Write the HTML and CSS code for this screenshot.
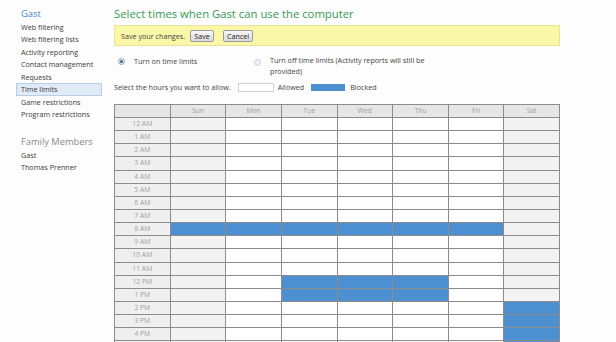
FILE: index.html
```html
<!DOCTYPE html>
<html>
<head>
<meta charset="utf-8">
<link rel="stylesheet" href="styles.css">
</head>
<body>
<div class="page">
  <aside class="sidebar">
    <h2 class="side-title">Gast</h2>
    <ul class="nav">
      <li>Web filtering</li>
      <li>Web filtering lists</li>
      <li>Activity reporting</li>
      <li>Contact management</li>
      <li>Requests</li>
      <li class="active">Time limits</li>
      <li>Game restrictions</li>
      <li>Program restrictions</li>
    </ul>
    <h3 class="family-title">Family Members</h3>
    <ul class="nav">
      <li>Gast</li>
      <li>Thomas Prenner</li>
    </ul>
  </aside>
  <main class="main">
    <h1 class="title">Select times when Gast can use the computer</h1>
    <div class="savebar">
      <span>Save your changes.</span>
      <button class="btn btn-save">Save</button>
      <button class="btn btn-cancel">Cancel</button>
    </div>
    <div class="options">
      <div class="option opt-on"><span class="radio checked"></span><span>Turn on time limits</span></div>
      <div class="option opt-off"><span class="radio"></span><span>Turn off time limits (Activity reports will still be provided)</span></div>
    </div>
    <div class="legend">
      <span>Select the hours you want to allow.</span>
      <span class="swatch allowed"></span><span>Allowed</span>
      <span class="swatch blocked"></span><span>Blocked</span>
    </div>
    <div class="grid">
      <div class="hd"></div><div class="hd">Sun</div><div class="hd">Mon</div><div class="hd">Tue</div><div class="hd">Wed</div><div class="hd">Thu</div><div class="hd">Fri</div><div class="hd">Sat</div>

      <div class="lb">12 AM</div><div class="c we"></div><div class="c"></div><div class="c"></div><div class="c"></div><div class="c"></div><div class="c"></div><div class="c we"></div>
      <div class="lb">1 AM</div><div class="c we"></div><div class="c"></div><div class="c"></div><div class="c"></div><div class="c"></div><div class="c"></div><div class="c we"></div>
      <div class="lb">2 AM</div><div class="c we"></div><div class="c"></div><div class="c"></div><div class="c"></div><div class="c"></div><div class="c"></div><div class="c we"></div>
      <div class="lb">3 AM</div><div class="c we"></div><div class="c"></div><div class="c"></div><div class="c"></div><div class="c"></div><div class="c"></div><div class="c we"></div>
      <div class="lb">4 AM</div><div class="c we"></div><div class="c"></div><div class="c"></div><div class="c"></div><div class="c"></div><div class="c"></div><div class="c we"></div>
      <div class="lb">5 AM</div><div class="c we"></div><div class="c"></div><div class="c"></div><div class="c"></div><div class="c"></div><div class="c"></div><div class="c we"></div>
      <div class="lb">6 AM</div><div class="c we"></div><div class="c"></div><div class="c"></div><div class="c"></div><div class="c"></div><div class="c"></div><div class="c we"></div>
      <div class="lb">7 AM</div><div class="c we"></div><div class="c"></div><div class="c"></div><div class="c"></div><div class="c"></div><div class="c"></div><div class="c we"></div>
      <div class="lb">8 AM</div><div class="c bl"></div><div class="c bl"></div><div class="c bl"></div><div class="c bl"></div><div class="c bl"></div><div class="c bl"></div><div class="c we"></div>
      <div class="lb">9 AM</div><div class="c we"></div><div class="c"></div><div class="c"></div><div class="c"></div><div class="c"></div><div class="c"></div><div class="c we"></div>
      <div class="lb">10 AM</div><div class="c we"></div><div class="c"></div><div class="c"></div><div class="c"></div><div class="c"></div><div class="c"></div><div class="c we"></div>
      <div class="lb">11 AM</div><div class="c we"></div><div class="c"></div><div class="c"></div><div class="c"></div><div class="c"></div><div class="c"></div><div class="c we"></div>
      <div class="lb">12 PM</div><div class="c we"></div><div class="c"></div><div class="c bl"></div><div class="c bl"></div><div class="c bl"></div><div class="c"></div><div class="c we"></div>
      <div class="lb">1 PM</div><div class="c we"></div><div class="c"></div><div class="c bl"></div><div class="c bl"></div><div class="c bl"></div><div class="c"></div><div class="c we"></div>
      <div class="lb">2 PM</div><div class="c we"></div><div class="c"></div><div class="c"></div><div class="c"></div><div class="c"></div><div class="c"></div><div class="c bl"></div>
      <div class="lb">3 PM</div><div class="c we"></div><div class="c"></div><div class="c"></div><div class="c"></div><div class="c"></div><div class="c"></div><div class="c bl"></div>
      <div class="lb">4 PM</div><div class="c we"></div><div class="c"></div><div class="c"></div><div class="c"></div><div class="c"></div><div class="c"></div><div class="c bl"></div>
      <div class="lb"></div><div class="c we"></div><div class="c"></div><div class="c"></div><div class="c"></div><div class="c"></div><div class="c"></div><div class="c bl"></div>
    </div>
  </main>
</div>
</body>
</html>
```
FILE: styles.css
```css
html, body {
  margin: 0;
  padding: 0;
  background: #fdfdfd;
}
body {
  font-family: "Open Sans", "Noto Sans", sans-serif;
  color: #333;
  font-size: 7.2px;
}
.page {
  display: flex;
  align-items: flex-start;
}
.sidebar {
  width: 114px;
  flex: 0 0 114px;
  box-sizing: border-box;
  padding: 7px 0 0 16px;
}
.side-title {
  margin: 0;
  padding-left: 5px;
  font-size: 9.4px;
  font-weight: normal;
  line-height: 13.5px;
  color: #3d86d2;
}
.nav {
  list-style: none;
  margin: 0;
  padding: 0;
  width: 86px;
}
.nav li {
  font-size: 7.2px;
  line-height: 12.5px;
  height: 12.5px;
  padding-left: 5px;
  box-sizing: border-box;
  color: #3a3a3a;
  white-space: nowrap;
}
.nav li.active {
  background: #e1ebf7;
  border: 1px solid #b7cde8;
  line-height: 10.5px;
  padding-left: 4px;
}
.family-title {
  margin: 14px 0 0 0;
  padding-left: 5px;
  font-size: 9.3px;
  font-weight: normal;
  line-height: 14px;
  color: #8a8a8a;
}
.main {
  flex: 0 0 446px;
  width: 446px;
  padding-top: 5px;
}
.title {
  margin: 0;
  font-size: 11.3px;
  font-weight: normal;
  line-height: 18px;
  color: #359a55;
}
.savebar {
  margin-top: 2px;
  height: 21px;
  box-sizing: border-box;
  background: #faf8a8;
  border: 1px solid #e9e49a;
  display: flex;
  align-items: center;
  padding-left: 6px;
  gap: 5px;
  color: #444;
}
.btn {
  font-family: inherit;
  font-size: 7.2px;
  height: 12px;
  padding: 0 4px;
  line-height: 10px;
  border: 1px solid #9a9a9a;
  border-radius: 2px;
  background: linear-gradient(#f6f6f6, #dcdcdc);
  color: #222;
}
.btn-save { width: 24px; padding: 0; }
.btn-cancel { width: 30px; padding: 0; margin-left: 4px; }
.options {
  display: flex;
  margin-top: 9px;
  padding-left: 2px;
  height: 25px;
}
.option {
  display: flex;
  align-items: flex-start;
  line-height: 11px;
  color: #444;
}
.opt-on {
  width: 136px;
  padding-top: 1px;
}
.opt-off {
  width: 190px;
}
.radio {
  flex: 0 0 7px;
  width: 7px;
  height: 7px;
  box-sizing: border-box;
  border-radius: 50%;
  border: 1px solid #b4b4b4;
  background: #ececec;
  margin: 2px 9px 0 2px;
  position: relative;
}
.opt-off .radio {
  margin-top: 4px;
  border-color: #cfcfcf;
  background: #f0f0f0;
  margin-right: 9px;
}
.radio.checked {
  border-color: #9aa4b0;
}
.radio.checked::after {
  content: "";
  position: absolute;
  left: 1px;
  top: 1px;
  width: 3px;
  height: 3px;
  border-radius: 50%;
  background: #2f5f96;
}
.legend {
  display: flex;
  align-items: center;
  height: 14px;
  color: #444;
}
.swatch {
  display: inline-block;
  box-sizing: border-box;
}
.swatch.allowed {
  width: 36px;
  height: 9px;
  border: 1px solid #d0d0d0;
  background: #fff;
  margin: 0 4px 0 7px;
}
.swatch.blocked {
  width: 34px;
  height: 7px;
  background: #4d90d2;
  margin: 0 5px 0 7px;
}
.grid {
  margin-top: 10px;
  display: grid;
  grid-template-columns: repeat(8, 1fr);
  grid-template-rows: 12px;
  grid-auto-rows: 12.15px;
  gap: 1px;
  padding: 1px;
  width: 446px;
  box-sizing: border-box;
  background: #8c8c8c;
}
.grid > div {
  font-size: 6.8px;
  line-height: 12px;
  text-align: center;
  color: #a0a0a0;
}
.hd {
  background: #e6e6e6;
}
.lb {
  background: #efefef;
}
.c {
  background: #ffffff;
}
.c.we {
  background: #f3f3f3;
}
.c.bl {
  background: #4d90d2;
}
```
